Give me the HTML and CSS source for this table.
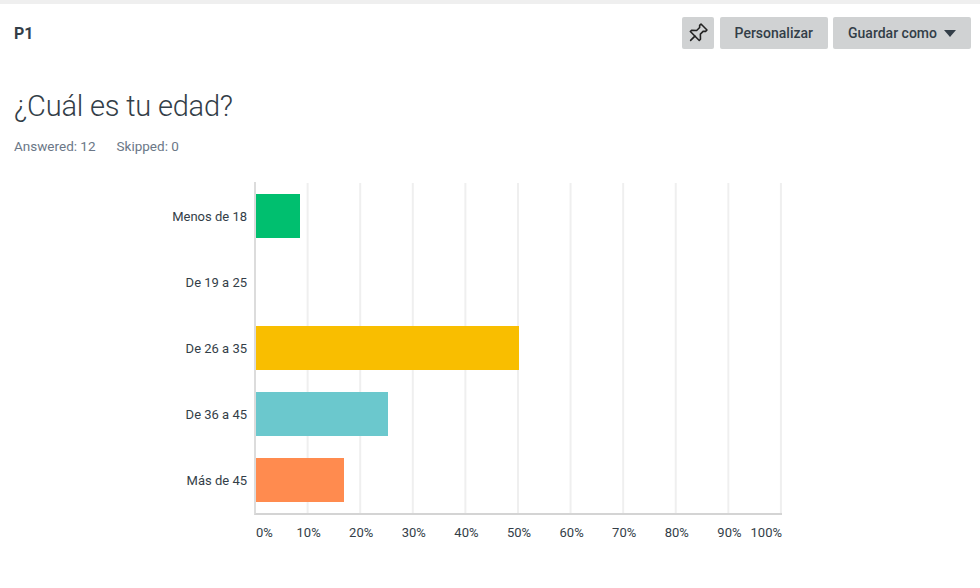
FILE: index.html
```html
<!DOCTYPE html>
<html lang="es">
<head>
<meta charset="utf-8">
<title>P1</title>
<link rel="stylesheet" href="styles.css">
</head>
<body>
<div class="topstrip"></div>
<header class="header">
  <div class="qnum">P1</div>
  <div class="actions">
    <button class="btn btn-icon" aria-label="Fijar">
      <svg width="21" height="21" viewBox="0 0 16 16" fill="none" stroke="#222" stroke-width="1.2" stroke-linejoin="round" stroke-linecap="round">
        <g transform="rotate(45 8 8)">
          <path d="M4.8 1h6.4v1.5l-1.3 1.1v3.2l2.8 2.7v1.3H3.1V9.5l2.8-2.7V3.6L4.8 2.5z"/>
          <path d="M8 10.8V15.4"/>
        </g>
      </svg>
    </button>
    <button class="btn">Personalizar</button>
    <button class="btn">Guardar como <span class="caret"></span></button>
  </div>
</header>
<main class="content">
  <h1 class="title">¿Cuál es tu edad?</h1>
  <div class="stats"><span>Answered: 12</span><span>Skipped: 0</span></div>
  <section class="chart">
    <div class="labels">
      <div class="label">Menos de 18</div>
      <div class="label">De 19 a 25</div>
      <div class="label">De 26 a 35</div>
      <div class="label">De 36 a 45</div>
      <div class="label">Más de 45</div>
    </div>
    <div class="plotwrap">
      <div class="plot">
        <div class="row"><div class="bar green" style="width:8.33%"></div></div>
        <div class="row"><div class="bar" style="width:0%"></div></div>
        <div class="row"><div class="bar yellow" style="width:50%"></div></div>
        <div class="row"><div class="bar teal" style="width:25%"></div></div>
        <div class="row"><div class="bar orange" style="width:16.67%"></div></div>
      </div>
      <div class="ticks">
        <span class="tick first">0%</span>
        <span class="tick" style="left:10%">10%</span>
        <span class="tick" style="left:20%">20%</span>
        <span class="tick" style="left:30%">30%</span>
        <span class="tick" style="left:40%">40%</span>
        <span class="tick" style="left:50%">50%</span>
        <span class="tick" style="left:60%">60%</span>
        <span class="tick" style="left:70%">70%</span>
        <span class="tick" style="left:80%">80%</span>
        <span class="tick" style="left:90%">90%</span>
        <span class="tick last">100%</span>
      </div>
    </div>
  </section>
</main>
</body>
</html>
```
FILE: styles.css
```css
* { box-sizing: border-box; }
html, body { margin: 0; padding: 0; background: #fff; }
body {
  font-family: Roboto, "Liberation Sans", sans-serif;
  color: #333e48;
  width: 980px;
  height: 588px;
  overflow: hidden;
}
.topstrip { height: 4px; background: #efefef; }
.header {
  display: flex;
  align-items: center;
  justify-content: space-between;
  padding: 13px 9px 0 14px;
  height: 45px;
}
.qnum { font-size: 16px; font-weight: 700; color: #333e48; }
.actions { display: flex; gap: 5px; align-items: center; }
.btn {
  height: 32px;
  border: none;
  border-radius: 2px;
  background: #d0d2d3;
  color: #333e48;
  font-family: Roboto, "Liberation Sans", sans-serif;
  font-weight: 500;
  font-size: 14px;
  padding: 0 15px;
  display: flex;
  align-items: center;
  gap: 6px;
}
.btn-icon { width: 32px; padding: 0; justify-content: center; margin-right: 1px; }
.caret {
  width: 0; height: 0;
  border-left: 6px solid transparent;
  border-right: 6px solid transparent;
  border-top: 7px solid #333e48;
  margin-left: 1px;
}
.content { padding: 0 0 0 14px; }
.title {
  margin: 40px 0 0 0;
  font-weight: 300;
  font-size: 29px;
  line-height: 34px;
  color: #333e48;
  letter-spacing: -0.2px;
}
.stats {
  margin-top: 15px;
  display: flex;
  gap: 21px;
  font-size: 13.5px;
  color: #6b7787;
}
.chart {
  display: flex;
  margin-top: 28px;
  margin-left: -14px;
}
.labels {
  width: 247px;
  display: flex;
  flex-direction: column;
  padding-top: 1px;
}
.label {
  height: 66px;
  display: flex;
  align-items: center;
  justify-content: flex-end;
  font-size: 13px;
  color: #333e48;
}
.plotwrap { margin-left: 7px; width: 528px; }
.plot {
  border-left: 2px solid #dcdcdc;
  border-bottom: 2px solid #d4d4d4;
  padding-top: 1px;
  background-image: linear-gradient(to right, transparent calc(100% - 2px), #efefef calc(100% - 2px));
  background-size: 10% 100%;
  background-origin: content-box;
  background-clip: content-box;
  background-repeat: repeat-x;
}
.row {
  height: 66px;
  display: flex;
  align-items: center;
}
.bar { height: 44px; }
.green { background: #00bf6f; }
.yellow { background: #f9be00; }
.teal { background: #6bc8cd; }
.orange { background: #ff8b4f; }
.ticks {
  position: relative;
  height: 20px;
  margin-top: 10px;
  margin-left: 2px;
  font-size: 13px;
  color: #333e48;
}
.tick {
  position: absolute;
  top: 0;
  transform: translateX(-50%);
  white-space: nowrap;
}
.tick.first { left: 0; transform: none; }
.tick.last { right: 0; transform: none; }
```
